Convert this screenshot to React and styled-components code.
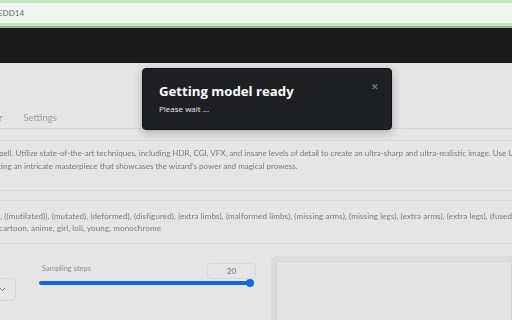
import React from 'react';
import styled, { createGlobalStyle } from 'styled-components';

const GlobalStyle = createGlobalStyle`
  html, body {
    margin: 0;
    padding: 0;
    width: 512px;
    height: 320px;
    overflow: hidden;
    background: #e5e5e5;
    font-family: Lato, "Open Sans", sans-serif;
  }
`;

const Frame = styled.div`
  position: relative;
  width: 512px;
  height: 320px;
  overflow: hidden;
  background: #e5e5e5;
`;

const UrlBar = styled.div`
  height: 20px;
  border-top: 3px solid #c6e2c5;
  border-bottom: 3px solid #c6e2c5;
  box-shadow: 0 2px 0 #9fb39f;
  background: #f0f7f0;
  display: flex;
  align-items: center;
  font-size: 8px;
  color: #5a6a5a;
  span {
    margin-left: -2px;
  }
`;

const Page = styled.div`
  filter: blur(0.6px);
  margin-top: 2px;
`;

const Header = styled.div`
  height: 35px;
  background: #1a1a1a;
`;

const TabBar = styled.div`
  display: flex;
  gap: 21px;
  align-items: center;
  padding-top: 44px;
  height: 21px;
  border-bottom: 1px solid #d6d6d8;
  font-size: 9.5px;
  color: #9a9a9a;
  span:first-child {
    margin-left: -1px;
  }
`;

const TextBox = styled.div`
  margin-top: ${p => p.$gap}px;
  height: ${p => p.$height}px;
  border-top: 1px solid #dadadc;
  border-bottom: 1px solid #dadadc;
  padding-top: ${p => p.$pad}px;
  box-sizing: border-box;
  font-size: 8px;
  line-height: ${p => p.$lh}px;
  letter-spacing: ${p => p.$ls || 0}px;
  color: #7a7a7a;
`;

const Line = styled.div`
  white-space: nowrap;
  overflow: hidden;
  margin-left: ${p => p.$shift || 0}px;
`;

const BottomRow = styled.div`
  display: grid;
  grid-template-columns: 26px 217px 269px;
  margin-top: 11px;
  align-items: start;
`;

const Dropdown = styled.div`
  margin-top: 23px;
  margin-left: -12px;
  height: 21px;
  border: 1px solid #d6d6d6;
  border-radius: 4px;
  display: flex;
  align-items: center;
  justify-content: flex-end;
  padding-right: 9px;
  width: 17px;
`;

const SliderCol = styled.div`
  padding-top: 9px;
`;

const SliderHead = styled.div`
  display: flex;
  justify-content: space-between;
  align-items: flex-start;
  padding-left: 16px;
  font-size: 7.5px;
  color: #8e8e8e;
`;

const NumberBox = styled.div`
  width: 47px;
  height: 14px;
  margin-top: -1px;
  border: 1px solid #d8d8d8;
  border-radius: 4px;
  display: flex;
  align-items: center;
  justify-content: center;
  font-size: 8px;
  color: #6e6e6e;
  margin-right: -13px;
`;

const Track = styled.div`
  position: relative;
  margin-top: 2px;
  margin-left: 13px;
  width: 211px;
  height: 4px;
  border-radius: 2px;
  background: #1268dd;
`;

const Thumb = styled.div`
  position: absolute;
  right: -4px;
  top: -2px;
  width: 8px;
  height: 8px;
  border-radius: 50%;
  background: #1268dd;
`;

const Preview = styled.div`
  margin-top: 1px;
  margin-left: 28px;
  height: 120px;
  border: 5px solid #dcdcde;
  border-right: none;
  border-radius: 6px 0 0 0;
  background: #e3e3e3;
  box-shadow: inset 0 0 0 1px #d4d4d6;
`;

const Toast = styled.div`
  position: absolute;
  left: 142px;
  top: 68px;
  width: 250px;
  height: 62px;
  box-sizing: border-box;
  padding: 12px 16px;
  background: #1f2024;
  border: 1px solid #111216;
  border-radius: 4px;
  box-shadow: 0 2px 10px rgba(0, 0, 0, 0.28);
  color: #fff;
  font-family: "Open Sans", sans-serif;
`;

const ToastTitle = styled.div`
  font-size: 13.2px;
  font-weight: 700;
  line-height: 20px;
`;

const ToastText = styled.div`
  margin-top: 2px;
  font-size: 8px;
  color: #ececec;
`;

const Close = styled.div`
  position: absolute;
  right: 12px;
  top: 11px;
  color: #8c8c90;
  font-size: 9px;
`;

const Chevron = () => (
  <svg width="7" height="5" viewBox="0 0 7 5" fill="none">
    <path d="M1 1l2.5 2.5L6 1" stroke="#777" strokeWidth="1" />
  </svg>
);

export default function App() {
  return (
    <Frame>
      <GlobalStyle />
      <UrlBar><span>EDD14</span></UrlBar>
      <Page>
        <Header />
        <TabBar>
          <span>r</span>
          <span>Settings</span>
        </TabBar>
        <TextBox $gap={11} $height={51} $pad={6} $lh={13}>
          <Line $shift={-1}>pell. Utilize state-of-the-art techniques, including HDR, CGI, VFX, and insane levels of detail to create an ultra-sharp and ultra-realistic image. Use Unreal Engine</Line>
          <Line $shift={-2}>ting an intricate masterpiece that showcases the wizard's power and magical prowess.</Line>
        </TextBox>
        <TextBox $gap={9} $height={44} $pad={9} $lh={12} $ls={0.12}>
          <Line $shift={-2}>), ((mutilated)), (mutated), (deformed), (disfigured), (extra limbs), (malformed limbs), (missing arms), (missing legs), (extra arms), (extra legs), (fused fingers)</Line>
          <Line $shift={-1}>cartoon, anime, girl, loli, young, monochrome</Line>
        </TextBox>
        <BottomRow>
          <Dropdown><Chevron /></Dropdown>
          <SliderCol>
            <SliderHead>
              <span>Sampling steps</span>
              <NumberBox>20</NumberBox>
            </SliderHead>
            <Track><Thumb /></Track>
          </SliderCol>
          <Preview />
        </BottomRow>
      </Page>
      <Toast>
        <ToastTitle>Getting model ready</ToastTitle>
        <ToastText>Please wait ...</ToastText>
        <Close>✕</Close>
      </Toast>
    </Frame>
  );
}
